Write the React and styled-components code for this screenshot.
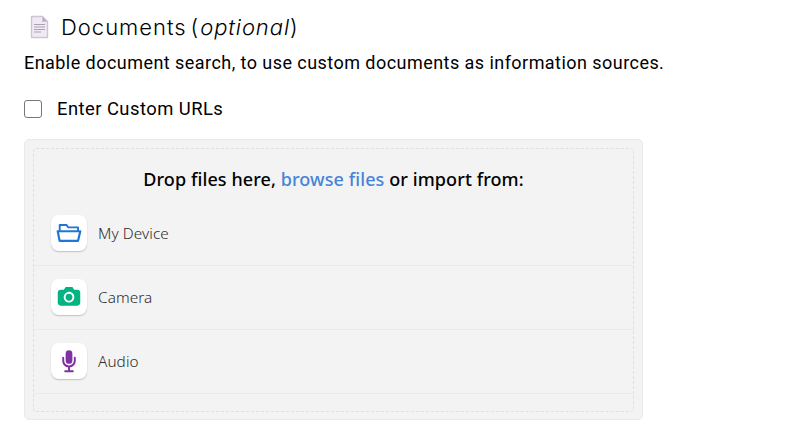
import React from "react";
import styled, { createGlobalStyle } from "styled-components";

const GlobalStyle = createGlobalStyle`
  * { box-sizing: border-box; }
  body { margin: 0; background: #fff; color: #000; }
`;

const Page = styled.main`
  display: flex;
  flex-direction: column;
  align-items: flex-start;
  padding: 12px 24px 0;
  font-family: Roboto, "Liberation Sans", sans-serif;
  font-size: 18px;
`;

const Heading = styled.h2`
  display: flex;
  align-items: center;
  gap: 12px;
  height: 30px;
  margin: 0 0 6px 6px;
  font: 300 22px/30px Inter, sans-serif;
  white-space: pre;
`;

const Title = styled.span`
  letter-spacing: ${(p) => p.$spacing};
`;

const Intro = styled.p`
  margin: 0 0 17px;
  height: 29px;
  line-height: 29px;
  letter-spacing: 0.45px;
  white-space: nowrap;
`;

const CheckLabel = styled.label`
  display: flex;
  align-items: center;
  gap: 15px;
  height: 28px;
  margin-bottom: 17px;
  font-size: 18.4px;
  letter-spacing: 0.46px;
  white-space: nowrap;
`;

const Checkbox = styled.input`
  appearance: none;
  width: 18px;
  height: 18px;
  margin: 2px 0 0;
  border: 1px solid #767676;
  border-radius: 3px;
  background: #fff;
`;

const Dashboard = styled.section`
  width: 619px;
  height: 281px;
  padding: 8px;
  border: 1px solid #eaeaea;
  border-radius: 5px;
  background: #f3f3f3;
  font-family: "Noto Sans", sans-serif;
`;

const DropArea = styled.div`
  height: 264px;
  width: 601px;
  border: 1px dashed #dfdfdf;
  border-radius: 3px;
`;

const DropTitle = styled.div`
  height: 53px;
  padding-top: 16px;
  font-size: 18px;
  line-height: 29px;
  font-weight: 500;
  text-align: center;
  letter-spacing: 0.09px;
  white-space: nowrap;
`;

const Browse = styled.a`
  color: #4683da;
`;

const Source = styled.div`
  display: flex;
  align-items: center;
  gap: 11px;
  height: 64px;
  padding: 0 0 1px 17px;
  border-bottom: 1px solid #eaeaea;
  color: #2c2c2c;
  font-size: 15.3px;
  font-weight: 300;
  letter-spacing: 0.1px;
`;

const Tile = styled.span`
  display: flex;
  width: 36px;
  height: 36px;
  border-radius: 8px;
  background: #fff;
  box-shadow: 0 1px 1px rgba(0, 0, 0, 0.1), 0 1px 2px rgba(0, 0, 0, 0.1), 0 2px 3px rgba(0, 0, 0, 0.02);
`;

const sources = [
  {
    name: "My Device",
    color: "#2275d7",
    path: "M8.45 22.087l-1.305-6.674h17.678l-1.572 6.674H8.45zm4.975-12.412l1.083 1.765a.823.823 0 00.715.386h7.951V13.5H8.587V9.675h4.838zM26.043 13.5h-1.195v-2.598c0-.463-.336-.75-.798-.75h-8.356l-1.082-1.766A.823.823 0 0013.897 8H7.728c-.462 0-.815.256-.815.718V13.5h-.956a.97.97 0 00-.746.37.972.972 0 00-.19.81l1.724 8.565c.095.44.484.755.933.755H24c.44 0 .824-.3.929-.727l2.043-8.568a.972.972 0 00-.176-.825.967.967 0 00-.753-.38z",
  },
  {
    name: "Camera",
    color: "#02b383",
    path: "M23.5 9.5c1.417 0 2.5 1.083 2.5 2.5v9.167c0 1.416-1.083 2.5-2.5 2.5h-15c-1.417 0-2.5-1.084-2.5-2.5V12c0-1.417 1.083-2.5 2.5-2.5h2.917l1.416-2.167C13 7.167 13.25 7 13.5 7h5c.25 0 .5.167.667.333L20.583 9.5H23.5zM16 11.417a4.706 4.706 0 00-4.75 4.75 4.704 4.704 0 004.75 4.75 4.703 4.703 0 004.75-4.75c0-2.663-2.09-4.75-4.75-4.75zm0 7.825c-1.744 0-3.076-1.332-3.076-3.074 0-1.745 1.333-3.077 3.076-3.077 1.744 0 3.074 1.333 3.074 3.076s-1.33 3.075-3.074 3.075z",
  },
  {
    name: "Audio",
    color: "#8030a3",
    path: "M21.143 12.297c.473 0 .857.383.857.857v2.572c0 3.016-2.24 5.513-5.143 5.931v2.64h2.572a.857.857 0 110 1.714H12.57a.857.857 0 110-1.714h2.572v-2.64C12.24 21.24 10 18.742 10 15.726v-2.572a.857.857 0 111.714 0v2.572A4.29 4.29 0 0016 20.01a4.29 4.29 0 004.286-4.285v-2.572c0-.474.384-.857.857-.857zM16 6.5a3 3 0 013 3v6a3 3 0 01-6 0v-6a3 3 0 013-3z",
  },
];

function PageIcon() {
  return (
    <svg width="19" height="24" viewBox="0 0 19 24">
      <path d="M1.5 1.5h11l5 5v16h-16z" fill="#f0eaf5" stroke="#cdc4d6" strokeWidth="1.4" strokeLinejoin="round" />
      <path d="M12.5 1.5v5h5z" fill="#b4acbc" stroke="#cdc4d6" strokeLinejoin="round" />
      <path d="M4 9.5h11M4 12h11M4 14.5h11M4 17h7" stroke="#aaa1b3" strokeWidth="1" />
    </svg>
  );
}

export default function App() {
  return (
    <>
      <GlobalStyle />
      <Page>
        <Heading>
          <PageIcon />
          <span>
            <Title $spacing="1px">Documents</Title>
            <Title $spacing="-2.5px"> </Title>
            <Title $spacing="2.2px">(</Title>
            <Title as="em" $spacing="0.9px">optional</Title>
            <Title $spacing="0">)</Title>
          </span>
        </Heading>
        <Intro>Enable document search, to use custom documents as information sources.</Intro>
        <CheckLabel>
          <Checkbox type="checkbox" />
          <span>Enter Custom URLs</span>
        </CheckLabel>
        <Dashboard>
          <DropArea>
            <DropTitle>
              Drop files here, <Browse>browse files</Browse> or import from:
            </DropTitle>
            {sources.map((s) => (
              <Source key={s.name}>
                <Tile>
                  <svg width="36" height="36" viewBox="0 0 32 32">
                    <path d={s.path} fill={s.color} />
                  </svg>
                </Tile>
                <span>{s.name}</span>
              </Source>
            ))}
          </DropArea>
        </Dashboard>
      </Page>
    </>
  );
}
